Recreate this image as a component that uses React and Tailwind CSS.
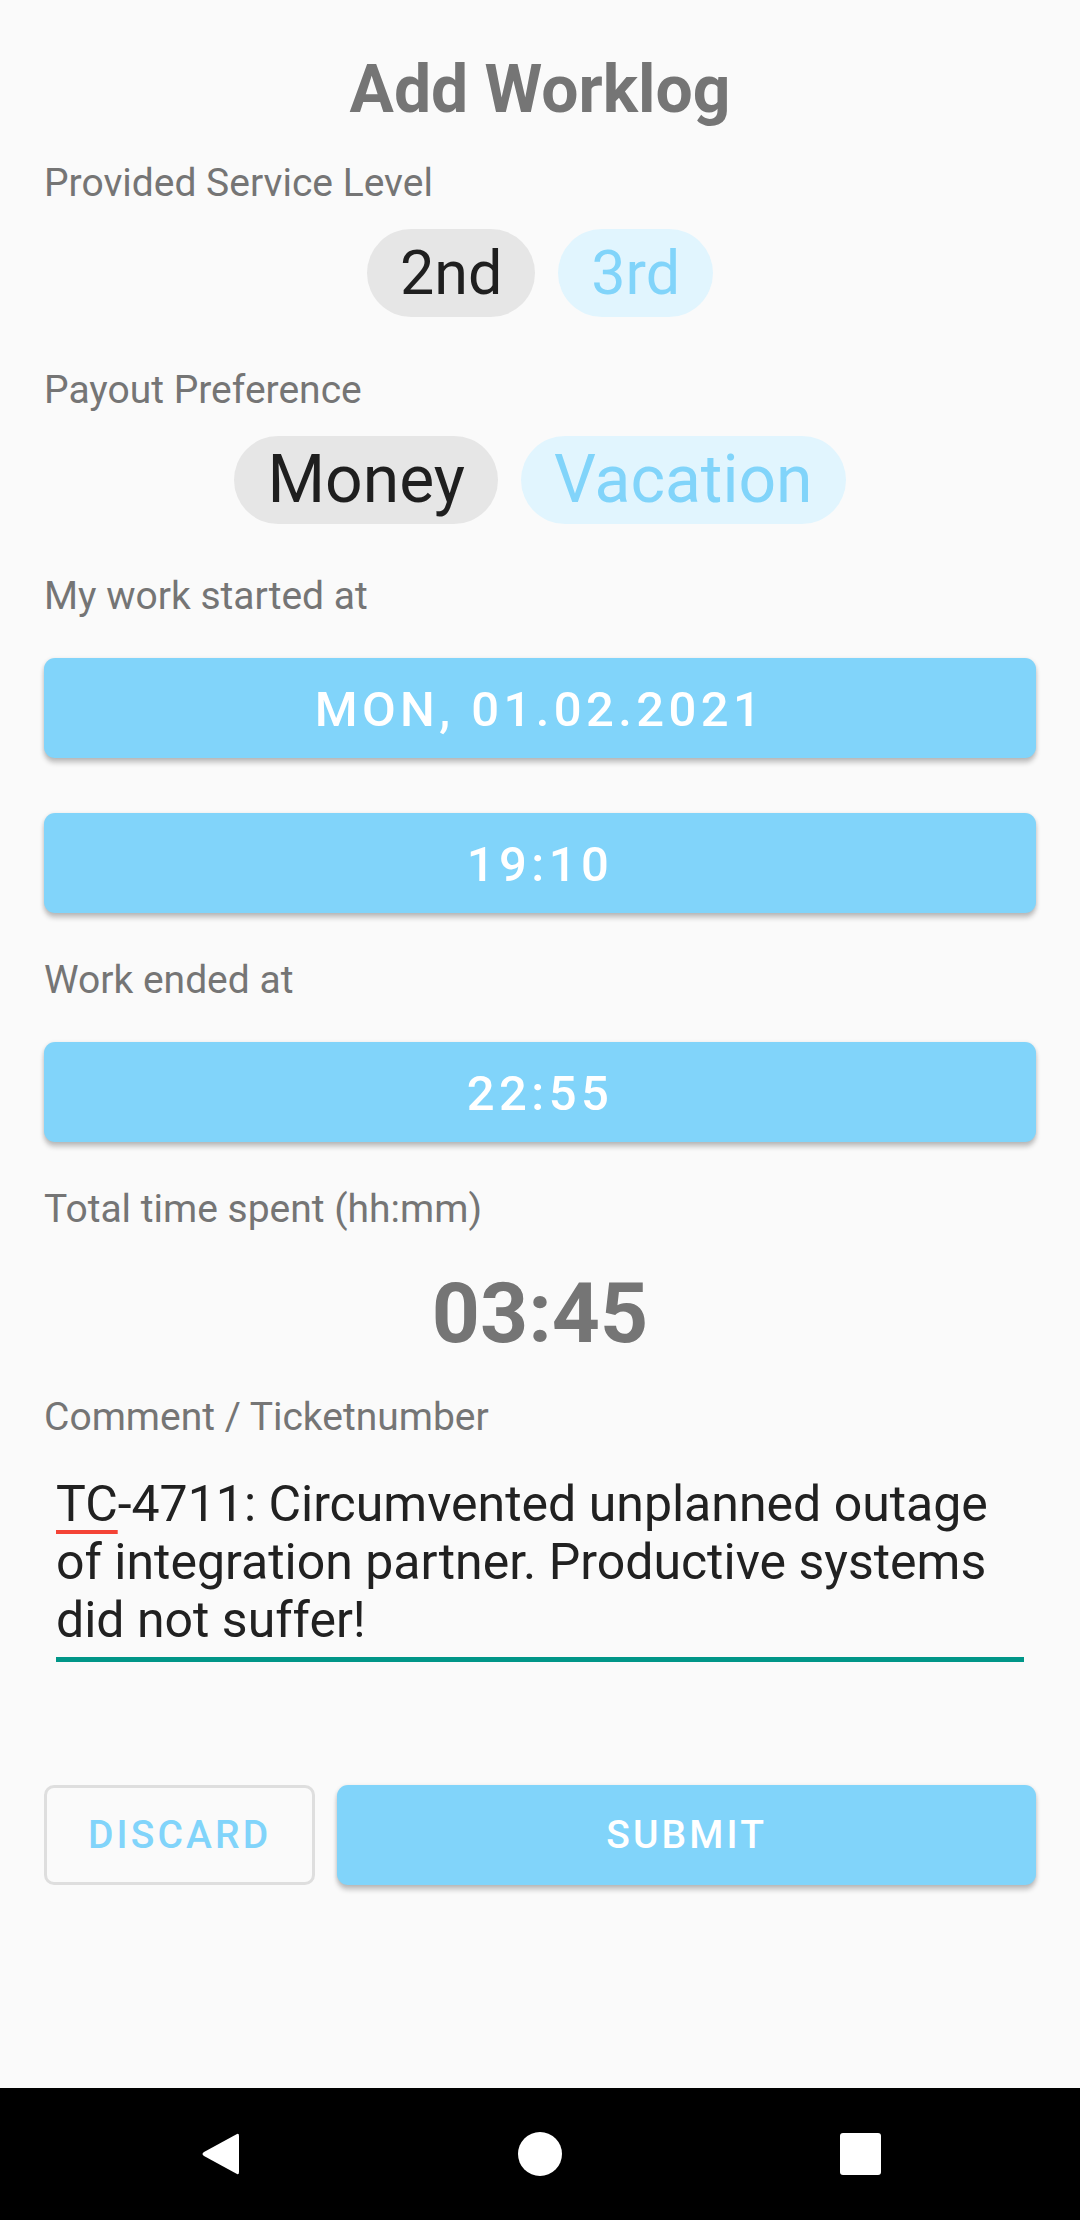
import React from "react";

const Label = ({ children, className = "" }) => (
  <p className={`text-[39px] leading-[44px] text-[#757575] ${className}`}>
    {children}
  </p>
);

const Chip = ({ children, active, big }) => (
  <span
    className={`h-[88px] px-[33px] rounded-full flex items-center leading-[88px] ${
      big ? "text-[66px]" : "text-[61px]"
    } ${active ? "bg-[#e6e6e6] text-[#1f1f1f]" : "bg-[#e1f5fe] text-[#81d4fa]"}`}
  >
    {children}
  </span>
);

const PickerButton = ({ children, className = "" }) => (
  <button
    className={`h-[100px] w-full rounded-[11px] bg-[#81d4fa] text-white text-[49px] font-medium tracking-[0.09em] flex items-center justify-center pt-[4px] shadow-[0_5px_5px_rgba(0,0,0,0.2),0_1px_4px_rgba(0,0,0,0.12)] ${className}`}
  >
    {children}
  </button>
);

const App = () => {
  return (
    <div className="w-[1080px] h-[2220px] bg-[#fafafa] flex flex-col font-['Roboto',sans-serif]">
      <div className="flex-1 flex flex-col px-[44px]">
        <h1 className="mt-[52px] text-center text-[66px] leading-[76px] font-bold text-[#757575]">
          Add Worklog
        </h1>

        <Label className="mt-[33px]">Provided Service Level</Label>
        <div className="mt-[24px] flex justify-center gap-[23px]">
          <Chip active>2nd</Chip>
          <Chip>3rd</Chip>
        </div>

        <Label className="mt-[51px]">Payout Preference</Label>
        <div className="mt-[24px] flex justify-center gap-[23px]">
          <Chip active big>
            Money
          </Chip>
          <Chip big>Vacation</Chip>
        </div>

        <Label className="mt-[50px]">My work started at</Label>
        <PickerButton className="mt-[40px]">MON, 01.02.2021</PickerButton>
        <PickerButton className="mt-[55px]">19:10</PickerButton>

        <Label className="mt-[45px]">Work ended at</Label>
        <PickerButton className="mt-[40px]">22:55</PickerButton>

        <Label className="mt-[45px]">Total time spent (hh:mm)</Label>
        <p className="mt-[33px] text-center text-[84px] leading-[100px] font-bold text-[#757575]">
          03:45
        </p>

        <Label className="mt-[31px]">Comment / Ticketnumber</Label>
        <div className="mt-[36px] mx-[12px] pb-[8px] border-b-[5px] border-[#009688]">
          <p className="text-[50px] leading-[58px] text-[#212121]">
            <span className="underline decoration-[#f44336] decoration-[4px] underline-offset-[9px]">
              TC
            </span>
            -4711: Circumvented unplanned outage of integration partner.
            Productive systems did not suffer!
          </p>
        </div>

        <div className="mt-[123px] flex gap-[22px]">
          <button className="h-[100px] px-[41px] rounded-[10px] border-[3px] border-[#dedede] text-[#81d4fa] text-[39px] font-medium tracking-[0.08em] flex items-center justify-center">
            DISCARD
          </button>
          <button className="flex-1 h-[100px] rounded-[11px] bg-[#81d4fa] text-white text-[39px] font-medium tracking-[0.08em] flex items-center justify-center shadow-[0_5px_5px_rgba(0,0,0,0.2),0_1px_4px_rgba(0,0,0,0.12)]">
            SUBMIT
          </button>
        </div>
      </div>

      {/* android nav bar */}
      <nav className="h-[132px] bg-black flex justify-center items-center">
        <div className="w-[320px] flex justify-center">
          <svg width="40" height="46" viewBox="0 0 40 46">
            <path
              d="M37 3 L4 21 Q1 23 4 25 L37 43 Q39 44 39 41 L39 5 Q39 2 37 3 Z"
              fill="white"
            />
          </svg>
        </div>
        <div className="w-[320px] flex justify-center">
          <div className="w-[44px] h-[44px] rounded-full bg-white" />
        </div>
        <div className="w-[320px] flex justify-center">
          <div className="w-[41px] h-[42px] rounded-[3px] bg-white" />
        </div>
      </nav>
    </div>
  );
};

export default App;
